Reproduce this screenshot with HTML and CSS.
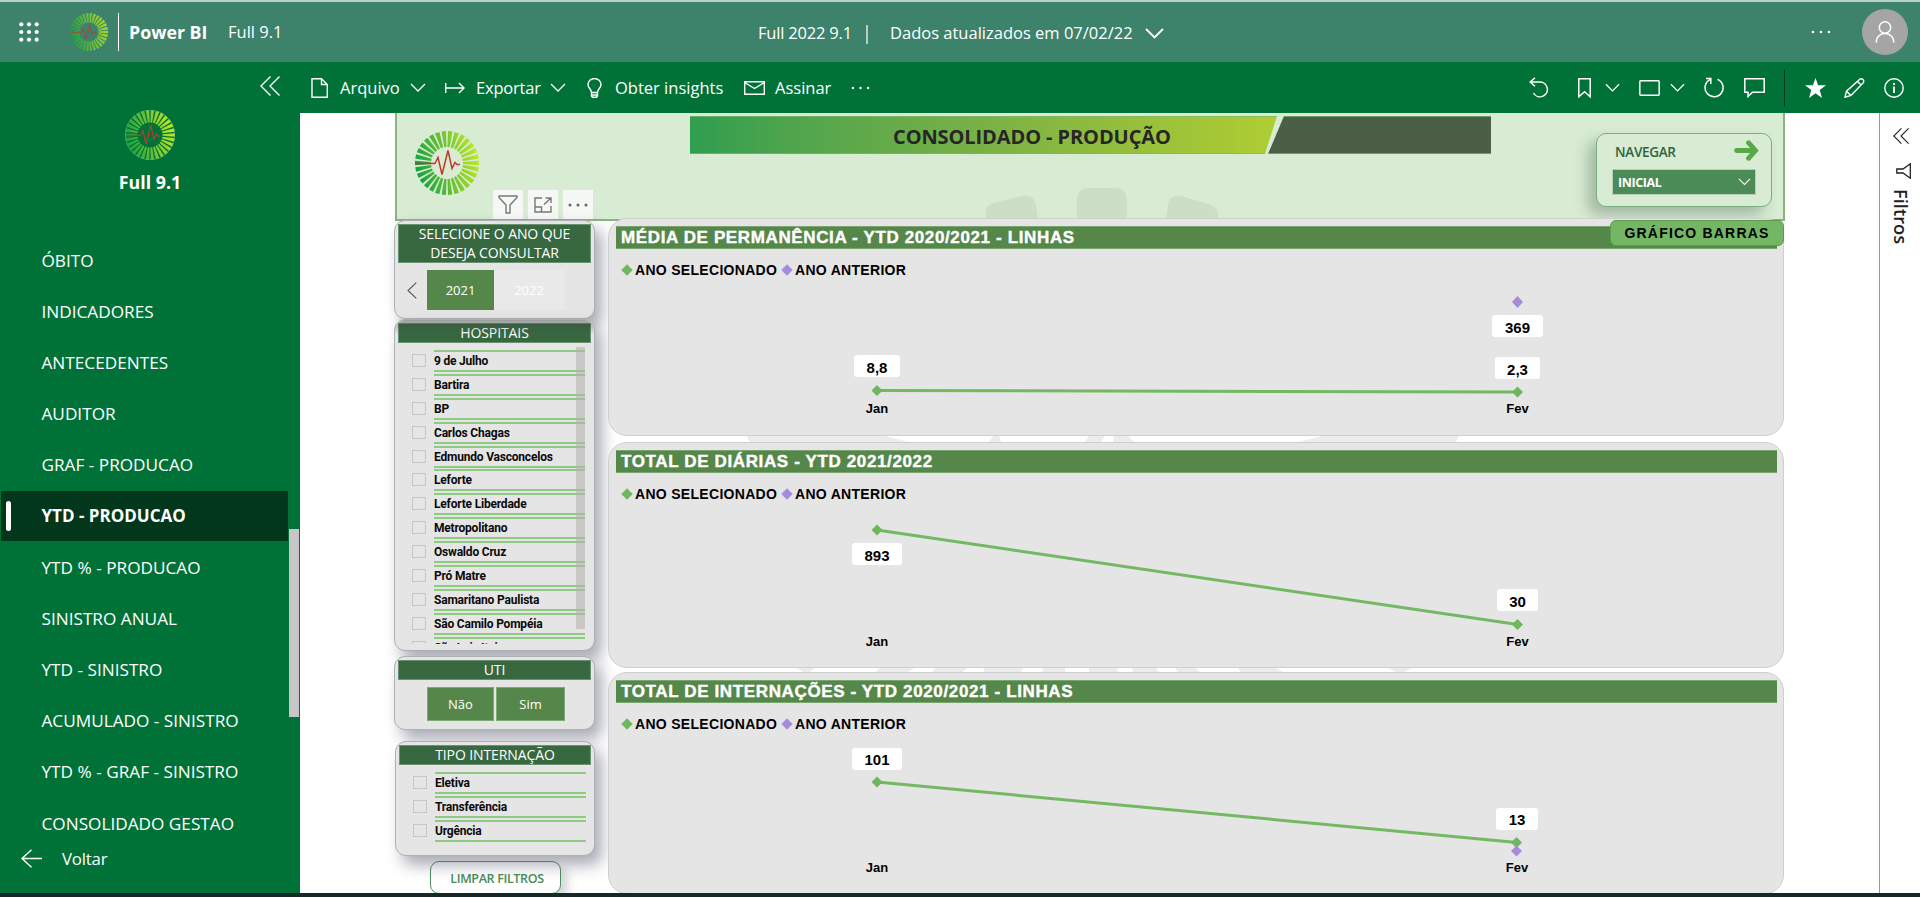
FILE: index.html
```html
<!DOCTYPE html>
<html lang="pt-BR">
<head>
<meta charset="utf-8">
<title>Full 9.1 - Power BI</title>
<link rel="stylesheet" href="styles.css">
</head>
<body>
<svg class="defs" width="0" height="0" aria-hidden="true">
  <defs>
    <linearGradient id="rays" gradientUnits="userSpaceOnUse" x1="0" y1="40" x2="64" y2="24">
      <stop offset="0" stop-color="#10a045"/><stop offset=".5" stop-color="#6cc136"/><stop offset="1" stop-color="#c3ea22"/>
    </linearGradient>
    <symbol id="logo" viewBox="0 0 64 64">
      <circle cx="32" cy="32" r="24" fill="none" stroke="url(#rays)" stroke-width="16" pathLength="300" stroke-dasharray="6.800 3.200" stroke-dashoffset="3.400"/>
      <path d="M0 32.500h20l3-6 4 17 6-24 4 18 3-6 2 2h3" fill="none" stroke="#c0392f" stroke-width="1.500"/>
    </symbol>
    <symbol id="chev" viewBox="0 0 16 10"><path d="M1 1l7 7 7-7" fill="none" stroke="currentColor" stroke-width="1.300"/></symbol>
    <symbol id="dots" viewBox="0 0 20 4"><circle cx="2" cy="2" r="1.300"/><circle cx="10" cy="2" r="1.300"/><circle cx="18" cy="2" r="1.300"/></symbol>
    <symbol id="dbl" viewBox="0 0 20 20"><path d="M10.500 .500L1 10l9.500 9.500M19.500 .500L10 10l9.500 9.500" fill="none" stroke="currentColor" stroke-width="1.400"/></symbol>
  </defs>
</svg>

<header class="top">
  <svg class="waffle" width="20" height="20" viewBox="0 0 20 20" fill="#fff"><circle cx="2.300" cy="2.300" r="2.100"/><circle cx="10" cy="2.300" r="2.100"/><circle cx="17.700" cy="2.300" r="2.100"/><circle cx="2.300" cy="10" r="2.100"/><circle cx="10" cy="10" r="2.100"/><circle cx="17.700" cy="10" r="2.100"/><circle cx="2.300" cy="17.700" r="2.100"/><circle cx="10" cy="17.700" r="2.100"/><circle cx="17.700" cy="17.700" r="2.100"/></svg>
  <svg class="top-logo" width="38" height="38"><use href="#logo"/></svg>
  <span class="top-brand">Power BI</span>
  <span class="top-ws">Full 9.1</span>
  <div class="top-mid"><span class="mid-name">Full 2022 9.1</span><i class="mid-bar"></i><span class="mid-date">Dados atualizados em 07/02/22</span><svg width="19" height="11" viewBox="0 0 19 11"><path d="M1 1l8.500 8.500L18 1" fill="none" stroke="#fff" stroke-width="1.900"/></svg></div>
  <svg class="top-dots" width="20" height="4" fill="#fff"><use href="#dots"/></svg>
  <span class="avatar"><svg width="20" height="22" viewBox="0 0 20 22" fill="none" stroke="#fff" stroke-width="1.500"><circle cx="10" cy="6.500" r="5.700"/><path d="M1.200 21.500c0-12 17.600-12 17.600 0"/></svg></span>
</header>

<div class="shell">
  <aside class="side">
    <div class="side-head"><svg width="20" height="20"><use href="#dbl"/></svg></div>
    <div class="side-app"><svg width="50" height="50"><use href="#logo"/><circle cx="25" cy="25" r="24.600" fill="none" stroke="#66ad77" stroke-width=".600"/></svg><span>Full 9.1</span></div>
    <nav class="menu">
      <a>ÓBITO</a><a>INDICADORES</a><a>ANTECEDENTES</a><a>AUDITOR</a><a>GRAF - PRODUCAO</a><a class="on">YTD - PRODUCAO</a><a>YTD % - PRODUCAO</a><a>SINISTRO ANUAL</a><a>YTD - SINISTRO</a><a>ACUMULADO - SINISTRO</a><a>YTD % - GRAF - SINISTRO</a><a>CONSOLIDADO GESTAO</a>
      <i class="menu-scroll"></i>
    </nav>
    <div class="back"><svg width="21" height="19" viewBox="0 0 21 19" fill="none" stroke="#fff" stroke-width="1.400"><path d="M21 9.500H1M10.500 .700L1 9.500l9.500 8.800"/></svg><span>Voltar</span></div>
  </aside>

  <main class="main">
    <div class="tools">
      <div class="tools-l">
        <svg class="i-file" width="17" height="20" viewBox="0 0 17 20" fill="none" stroke="#fff" stroke-width="1.400"><path d="M1 .700h9.500l5.800 5.800v12.800H1zM10.500 .700v5.800h5.800"/></svg>
        <span class="t-arq">Arquivo</span><svg class="c1" width="16" height="10"><use href="#chev"/></svg>
        <svg class="i-exp" width="20" height="12" viewBox="0 0 20 12" fill="none" stroke="#fff" stroke-width="1.400"><path d="M.700 1v10M.700 6H19M14 1l5 5-5 5"/></svg>
        <span class="t-exp">Exportar</span><svg class="c2" width="16" height="10"><use href="#chev"/></svg>
        <svg class="i-bulb" width="15" height="20" viewBox="0 0 15 20" fill="none" stroke="#fff" stroke-width="1.400"><path d="M4.500 14.500C4.500 11 1 10 1 6.700a6.500 6.200 0 0 1 13 0C14 10 10.500 11 10.500 14.500zM4.500 14.500v3.500l1 1.300h4l1-1.300v-3.500M4.500 17h6"/></svg>
        <span class="t-obt">Obter insights</span>
        <svg class="i-mail" width="21" height="14" viewBox="0 0 21 14" fill="none" stroke="#fff" stroke-width="1.400"><path d="M.700 .700h19.600v12.600H.700zM.700 1.500l9.800 6 9.800-6"/></svg>
        <span class="t-ass">Assinar</span>
        <svg class="i-dots" width="19" height="4" fill="#fff"><use href="#dots"/></svg>
      </div>
      <div class="tools-r">
        <svg width="20" height="21" viewBox="0 0 20 21" fill="none" stroke="#fff" stroke-width="1.500"><path d="M6 .800L1.200 5 6 9.300M1.200 5H11a7.400 7.400 0 1 1-6.500 11"/></svg>
        <svg class="g28" width="13" height="20" viewBox="0 0 13 20" fill="none" stroke="#fff" stroke-width="1.500"><path d="M.800 .800h11.400v18l-5.700-5-5.700 5z"/></svg>
        <svg class="g14" width="15" height="10"><use href="#chev"/></svg>
        <svg class="g20" width="21" height="16" viewBox="0 0 21 16" fill="none" stroke="#fff" stroke-width="1.500"><rect x=".800" y=".800" width="19.400" height="14.400" rx="1"/></svg>
        <svg class="g10" width="15" height="10"><use href="#chev"/></svg>
        <svg class="g19" width="21" height="21" viewBox="0 0 21 21" fill="none" stroke="#fff" stroke-width="1.500"><path d="M13.500 2.400a9 9 0 1 1-7.500.300M6.800 7V1.500H2"/></svg>
        <svg class="g19" width="21" height="20" viewBox="0 0 21 20" fill="none" stroke="#fff" stroke-width="1.500"><path d="M.800 .800h19.400v13.400H8.500L4 18.500v-4.300H.800z"/></svg>
        <i class="split"></i>
        <svg class="g20" width="21" height="20" viewBox="0 0 21 20" fill="#fff"><path d="M10.500 0l2.600 7.300H21l-6.300 4.800L17 20l-6.500-4.800L4 20l2.300-7.900L0 7.300h7.900z"/></svg>
        <svg class="g18" width="21" height="20" viewBox="0 0 21 20" fill="none" stroke="#fff" stroke-width="1.400"><path d="M1 19.200l1.500-6L15.500 1.500c2.500-2 5.500 1 3.500 3.500L7 17.500zM13.500 3.500l3.800 3.800M2.500 13.200L7 17.500"/></svg>
        <svg class="g19" width="20" height="20" viewBox="0 0 20 20" fill="none" stroke="#fff" stroke-width="1.400"><circle cx="10" cy="10" r="9.200"/><path d="M10 8.500v6.500M10 5v2" stroke-width="1.800"/></svg>
      </div>
    </div>

    <div class="canvas">
      <section class="report">
        <svg class="mark" width="720" height="500" viewBox="740 185 720 500" fill="#ececec">
          <path d="M747 436h138l24 6H749zM993 436h6l2 6h-12zM1089 436h16l-4 6h-16zM1114 436h14l6 6h-21zM1322 436h137l-3 6H1298zM796 668h19l-8 6zM880 668h34l-9 6h-32zM935 668h32l-6 6h-30zM985 668h38l-3 6h-38zM1043 668h22v6h-23zM1089 668h28l2 6h-30zM1132 668h24l4 6h-26zM1175 668h20l8 6h-24zM1238 668h38l10 6h-44zM1388 668h24l-12 6z"/>
        </svg>
        <div class="banner">
          <svg class="petals" width="236" height="32" viewBox="0 0 236 32" fill="#cbdfc7"><path d="M0 32V24c0-5 3-8 8-9l28-7c8-1 13 2 14 10l2 14zM91 32V13C91 4 95 0 103 0h26c8 0 12 4 12 13v19zM180 32l2-15c1-7 6-10 13-9l27 8c6 2 10 5 10 11v5z"/></svg>
          <svg class="b-logo" width="64" height="64"><use href="#logo"/></svg>
          <div class="title-band">
            <svg width="801" height="38" viewBox="0 0 801 38"><defs><linearGradient id="band"><stop offset="0" stop-color="#2e9e50"/><stop offset=".16" stop-color="#4ea44d"/><stop offset=".5" stop-color="#7ab146"/><stop offset="1" stop-color="#b0cd33"/></linearGradient></defs><path d="M0 0h587l-12 38H0z" fill="url(#band)"/><path d="M594 0h207v38H578z" fill="#4b5f46"/><path d="M0 .500h587M594 .500h207M0 37.500h575M578 37.500h223" stroke="#7fb56d" stroke-opacity=".7"/></svg>
            <span class="band-title">CONSOLIDADO - PRODUÇÃO</span>
          </div>
          <div class="visual-tools">
            <span><svg width="20" height="19" viewBox="0 0 20 19" fill="none" stroke="#777" stroke-width="1.400"><path d="M1 1h18v1.500L12 10v8H8v-8L1 2.500z"/></svg></span>
            <span><svg width="18" height="16" viewBox="0 0 18 16" fill="none" stroke="#777" stroke-width="1.400"><path d="M8 1H1v14h16V9M1 10h6.500v5M11.500 1H17v5M17 1l-7 6.500"/></svg></span>
            <span><svg width="20" height="4" viewBox="0 0 20 4" fill="#666"><circle cx="2" cy="2" r="1.500"/><circle cx="10" cy="2" r="1.500"/><circle cx="18" cy="2" r="1.500"/></svg></span>
          </div>
          <div class="nav-card">
            <div class="nav-row"><span>NAVEGAR</span><svg width="25" height="21" viewBox="0 0 25 21" fill="none" stroke="#58a748" stroke-width="4.800" stroke-linecap="round"><path d="M2.500 10.500h18M14.500 2.700l7 7.800-7 7.800"/></svg></div>
            <div class="nav-sel"><span>INICIAL</span><svg width="13" height="8"><use href="#chev"/></svg></div>
          </div>
        </div>

        <div class="body">
          <div class="filters">
            <section class="card f-ano">
              <h3>SELECIONE O ANO QUE<br>DESEJA CONSULTAR</h3>
              <div class="years"><svg width="10" height="17" viewBox="0 0 10 17" fill="none" stroke="#555" stroke-width="1.100"><path d="M9.300 .600L1 8.500l8.300 7.900"/></svg><b>2021</b><b class="off">2022</b></div>
            </section>
            <section class="card f-hosp">
              <h3>HOSPITAIS</h3>
              <ul class="list"><li><i></i><span>9 de Julho</span></li><li><i></i><span>Bartira</span></li><li><i></i><span>BP</span></li><li><i></i><span>Carlos Chagas</span></li><li><i></i><span>Edmundo Vasconcelos</span></li><li><i></i><span>Leforte</span></li><li><i></i><span>Leforte Liberdade</span></li><li><i></i><span>Metropolitano</span></li><li><i></i><span>Oswaldo Cruz</span></li><li><i></i><span>Pró Matre</span></li><li><i></i><span>Samaritano Paulista</span></li><li><i></i><span>São Camilo Pompéia</span></li><li><i></i><span>São Luiz Itaim</span></li></ul>
              <i class="list-scroll"></i>
            </section>
            <section class="card f-uti"><h3>UTI</h3><div class="pair"><b>Não</b><b>Sim</b></div></section>
            <section class="card f-tipo"><h3>TIPO INTERNAÇÃO</h3>
              <ul class="list"><li><i></i><span>Eletiva</span></li><li><i></i><span>Transferência</span></li><li><i></i><span>Urgência</span></li></ul>
            </section>
            <button class="clear">LIMPAR FILTROS</button>
          </div>

          <div class="charts">
            <section class="chart h1"><h2><span class="w1">MÉDIA DE PERMANÊNCIA - YTD 2020/2021 - LINHAS</span></h2>
              <span class="bars">GRÁFICO BARRAS</span>
              <div class="legend"><i></i><span class="l1">ANO SELECIONADO</span><i class="p"></i><span class="l2">ANO ANTERIOR</span></div>
              <svg class="plot" width="1176" height="150" viewBox="608 285 1176 150"><path d="M877 390.500L1517.500 392" class="ln"/><path class="dg" d="M877 385l5.500 5.500-5.500 5.500-5.500-5.500zM1517.500 386.500l5.500 5.500-5.500 5.500-5.500-5.500z"/><path class="dp" d="M1517.500 296l5.500 6-5.500 6-5.500-6z"/>
                <rect x="854" y="355" width="46" height="22" rx="3"/><rect x="1492" y="315" width="51" height="22" rx="3"/><rect x="1495" y="357" width="45" height="22" rx="3"/>
                <text x="877" y="373" class="v">8,8</text><text x="1517.500" y="333" class="v">369</text><text x="1517.500" y="375" class="v">2,3</text><text x="877" y="413" class="a">Jan</text><text x="1517.500" y="413" class="a">Fev</text></svg>
            </section>
            <section class="chart h2"><h2><span class="w2">TOTAL DE DIÁRIAS - YTD 2021/2022</span></h2>
              <div class="legend"><i></i><span class="l1">ANO SELECIONADO</span><i class="p"></i><span class="l2">ANO ANTERIOR</span></div>
              <svg class="plot" width="1176" height="150" viewBox="608 509 1176 150"><path d="M877 530L1517.500 624.500" class="ln"/><path class="dg" d="M877 524.500l5.500 5.500-5.500 5.500-5.500-5.500zM1517.500 619l5.500 5.500-5.500 5.500-5.500-5.500z"/>
                <rect x="852" y="543" width="50" height="22" rx="3"/><rect x="1497" y="589" width="41" height="22" rx="3"/>
                <text x="877" y="561" class="v">893</text><text x="1517.500" y="607" class="v">30</text><text x="877" y="646" class="a">Jan</text><text x="1517.500" y="646" class="a">Fev</text></svg>
            </section>
            <section class="chart h3"><h2><span class="w3">TOTAL DE INTERNAÇÕES - YTD 2020/2021 - LINHAS</span></h2>
              <div class="legend"><i></i><span class="l1">ANO SELECIONADO</span><i class="p"></i><span class="l2">ANO ANTERIOR</span></div>
              <svg class="plot" width="1176" height="150" viewBox="608 739 1176 150"><path d="M877 782L1517 842.500" class="ln"/><path class="dg" d="M877 776.500l5.500 5.500-5.500 5.500-5.500-5.500zM1516.500 837l5.500 5.500-5.500 5.500-5.500-5.500z"/><path class="dp" d="M1516.500 845.500l5.500 5.500-5.500 5.500-5.500-5.500z"/>
                <rect x="852" y="748" width="50" height="22" rx="3"/><rect x="1496" y="808" width="42" height="22" rx="3"/>
                <text x="877" y="765" class="v">101</text><text x="1517" y="825" class="v">13</text><text x="877" y="872" class="a">Jan</text><text x="1517" y="872" class="a">Fev</text></svg>
            </section>
          </div>
        </div>
      </section>

      <aside class="pane">
        <svg width="16" height="16"><use href="#dbl"/></svg>
        <svg class="pf" width="15" height="16" viewBox="0 0 15 16" fill="none" stroke="#222" stroke-width="1.300"><path d="M14.300 .800v14.400L7 10H.800V6H7z"/></svg>
        <span>Filtros</span>
      </aside>
    </div>
  </main>
</div>
<div class="taskbar"></div>
</body>
</html>
```
FILE: styles.css
```css
* { box-sizing: border-box; }
body { margin: 0; width: 1920px; height: 897px; overflow: hidden; display: flex; flex-direction: column; font-family: "Open Sans", "Noto Sans", sans-serif; color: #fff; background: #fff; }
svg { display: block; flex: none; }
.defs { position: absolute; }
span { white-space: nowrap; }
h2, h3, ul { margin: 0; padding: 0; font-weight: normal; }

.top { height: 62px; flex: none; background: #3d826b; border-top: 2px solid #b5d0cf; display: flex; align-items: center; padding: 0 12px 0 19px; font-size: 16.5px; position: relative; }
.top-logo { margin-left: 31px; opacity: .85; }
.top-brand { font-weight: 700; margin-left: 10px; border-left: 1.500px solid #fff; line-height: 35px; padding: 2px 0 0 10px; height: 38px; width: 100px; font-size: 17.800px; }
.top-ws { margin: -2px 0 0 10px; }
.top-mid { display: flex; align-items: center; position: absolute; left: 758px; top: 14px; height: 32px; }
.mid-name { width: 97px; letter-spacing: -0.200px; }
.mid-bar { width: 2px; height: 19px; background: #b7cec6; margin: 5px 22px 0 11px; }
.mid-date { width: 246px; }
.mid-date + svg { margin: 2px 0 0 9px; }
.top-dots { margin-left: auto; }
.avatar { width: 46px; height: 46px; margin-left: 31px; border-radius: 50%; background: #a5a5a5; display: flex; align-items: center; justify-content: center; }

.shell { display: flex; height: 831px; flex: none; }
.side { width: 300px; background: #007238; display: flex; flex-direction: column; flex: none; }
.side-head { display: flex; justify-content: flex-end; padding: 14px 20px 0 0; height: 48px; }
.side-app { display: flex; flex-direction: column; align-items: center; font-weight: 700; font-size: 17.800px; line-height: 24px; height: 125px; gap: 10px; }
.menu { position: relative; height: 610px; overflow: hidden; }
.menu a { display: flex; align-items: center; height: 50px; margin: 0 12px 1.200px 1px; padding-left: 40.500px; font-size: 17.200px; position: relative; }
.menu .on { background: #02371c; font-weight: 700; font-size: 17px; }
.menu .on::before { content: ""; position: absolute; left: 5px; top: 10px; width: 5px; height: 30px; border-radius: 3px; background: #fff; }
.menu-scroll { position: absolute; left: 289px; top: 294px; width: 10px; height: 188px; background: #c6c6c6; }
.back { display: flex; align-items: center; gap: 20px; padding-left: 21px; height: 28px; font-size: 16.800px; margin-top: -1px; letter-spacing: -0.200px; }

.main { flex: 1; min-width: 0; display: flex; flex-direction: column; }
.tools { height: 51px; background: #007238; display: flex; justify-content: space-between; padding: 0 16px 0 11px; font-size: 16.5px; }
.tools-l, .tools-r { display: flex; align-items: center; }
.tools-l span { margin-top: 0; }
.t-arq { width: 61px; margin: 0 9px 0 12px; }
.i-exp { margin-left: 19px; }
.t-exp { width: 65px; margin: 0 9px 0 11px; letter-spacing: -0.200px; }
.i-bulb { margin-left: 21px; }
.tools-l .t-obt { width: 109px; margin: 0 20px 0 13px; }
.t-ass { width: 56px; margin: 0 20px 0 10px; }
.g28 { margin-left: 29px; } .g14 { margin-left: 14px; } .g20 { margin-left: 19.500px; } .g10 { margin-left: 9.500px; } .g19 { margin-left: 19px; } .g18 { margin-left: 18.500px; }
.split { width: 1px; height: 36px; background: #03371c; margin-left: 19.500px; }

.canvas { flex: 1; display: flex; justify-content: space-between; background: #fff; min-height: 0; overflow: hidden; }
.report { margin-left: 95px; width: 1390px; position: relative; height: 780px; }
.mark { position: absolute; left: 345px; top: 72px; }
.banner { height: 108px; position: relative; background: #d8ebd3; border: 2px solid #8bb37f; border-top: 0; display: flex; }
.petals { position: absolute; left: 589px; top: 75px; }
.b-logo { margin: 18px 0 0 18px; }
.title-band { position: relative; margin: 3px 0 0 211px; width: 801px; height: 38px; }
.band-title { position: absolute; left: 203px; top: 6px; font-size: 20px; font-weight: 700; line-height: 30px; color: #262626; letter-spacing: -0.100px; }
.visual-tools { position: absolute; left: 96px; top: 77px; display: flex; gap: 5px; }
.visual-tools span { width: 30px; height: 29px; background: #f5f8f4; display: flex; align-items: center; justify-content: center; }
.nav-card { margin: 20px 0 0 105px; width: 176px; height: 74px; border: 1.500px solid #79ae82; border-radius: 10px; background: #d8ebd3; box-shadow: -8px 8px 14px rgba(90,110,90,.4); padding: 6px 15px; }
.nav-row { display: flex; justify-content: space-between; align-items: center; color: #2f6340; font-weight: 600; font-size: 13.500px; height: 22px; padding: 1px 0 0 3px; margin-right: -3px; letter-spacing: -0.300px; }
.nav-row svg { margin-top: -3px; }
.nav-sel { margin-top: 7px; height: 26px; background: #4a8b57; border: 1px solid #b8cfb7; display: flex; align-items: center; justify-content: space-between; padding: 0 4px 0 5px; font-size: 12.500px; font-weight: 700; letter-spacing: -0.400px; }

.body { display: flex; position: relative; margin-top: -2px; }
.filters { width: 200px; margin: 1px 0 0 -1px; display: flex; flex-direction: column; align-items: flex-start; flex: none; }
.card { width: 201px; background: #e5e5e5; border: 1px solid #aeb0b3; border-radius: 11px; box-shadow: 7px 9px 15px rgba(75,80,100,.48); padding: 3px 3px; position: relative; flex: none; }
.card h3 { background: #376840; border: 1px solid #6a9170; text-align: center; font-size: 14px; line-height: 18.500px; letter-spacing: -0.100px; }
.f-ano { height: 99px; }
.years { display: flex; align-items: center; margin: 7px 0 0 9px; }
.years b { width: 67px; height: 40px; line-height: 40px; text-align: center; font-weight: 400; font-size: 13px; background: #55874a; margin-left: 10px; }
.years .off { width: 70px; background: #e9e9e9; color: #fff; margin-left: 0; }
.f-hosp { height: 332px; }
.f-hosp::before { content: ""; position: absolute; inset: 0 0 auto 0; height: 14px; border-radius: 11px 11px 0 0; background: linear-gradient(rgba(60,70,65,.45), transparent); }
.f-hosp h3 { line-height: 18px; }
.list { list-style: none; margin: 6px 0 0 14px; height: 295px; overflow: hidden; }
.list li { display: flex; align-items: center; height: 23.900px; }
.list i { width: 14px; height: 13px; border: 1px solid #c6c6ca; margin: 0 8px 1px 0; flex: none; }
.list span { width: 151px; height: 22px; border: solid #8fca82; border-width: 2px 0; font: 700 12px/19px Roboto, sans-serif; color: #0a0a0a; letter-spacing: -0.200px; }
.list-scroll { position: absolute; left: 181px; top: 27px; width: 9px; height: 282px; background: rgba(180,177,175,.55); }
.f-uti { margin-top: 5px; height: 74px; }
.pair { display: flex; gap: 2px; margin: 7px 0 0 29px; }
.pair b { width: 67px; height: 34px; line-height: 32px; border: 1px solid #7faa76; background: #55874a; text-align: center; font-weight: 400; font-size: 13px; }
.f-uti h3, .f-tipo h3 { line-height: 18px; }
.pair b + b { width: 69px; }
.f-tipo { width: 200px; margin: 11px 0 0 1px; height: 115px; }
.f-tipo .list { height: 74px; margin-top: 6px; }
.clear { margin: 5px 0 0 36px; width: 131px; height: 33px; border: 1.500px solid #4f8f62; border-radius: 9px; background: #fff; color: #4a8b57; font: 600 12.500px "Open Sans", sans-serif; letter-spacing: -0.350px; box-shadow: 7px 7px 10px rgba(90,95,110,.25); padding: 2px 0 0 3px; }

.charts { margin-left: 14px; width: 1176px; display: flex; flex-direction: column; position: relative; margin-top: -1px; }
.chart { width: 1176px; background: #e5e5e5; border: 1px solid #cfcfcf; border-radius: 19px; padding: 7px 6px 0 7px; position: relative; flex: none; font-family: "Liberation Sans", Arial, sans-serif; }
.h1 { height: 218px; } .h2 { height: 226px; margin-top: 6px; } .h3 { height: 222px; margin-top: 4px; }
.chart h2 { height: 23px; background: #55874a; border: 1px solid #79a56f; border-width: 1px 0; padding-left: 5px; font-size: 17px; font-weight: 700; line-height: 21px; letter-spacing: .630px; -webkit-text-stroke: .4px #fff; }
.legend { display: flex; align-items: center; height: 16px; margin: 13px 0 0 6px; font-size: 14px; font-weight: 700; color: #000; letter-spacing: .300px; }
.legend i { width: 8px; height: 8px; background: #6fb75f; transform: rotate(45deg); margin: 0 4px 0 1px; }
.legend .p { background: #a58cda; margin-left: 8px; }
.legend .l1 { width: 140px; }
.plot { position: absolute; left: -1px; top: 66px; overflow: visible; }
.bars { position: absolute; right: -1px; top: 1px; width: 174px; height: 26px; background: #73b663; border: 1px solid #5b9b4e; border-radius: 6px; color: #000; font-size: 14px; font-weight: 700; line-height: 25px; text-align: center; letter-spacing: 1.200px; }
.ln { stroke: #73b863; stroke-width: 3; fill: none; }
.dg { fill: #6fb75f; } .dp { fill: #a58cda; }
.plot rect { fill: #fff; }
.plot text { text-anchor: middle; font-weight: 700; fill: #000; }
.v { font-size: 15px; } .a { font-size: 13px; }

.pane { width: 41px; border-left: 1px solid #9a9a9a; display: flex; flex-direction: column; align-items: center; padding: 15px 0 0 2px; color: #222; flex: none; }
.pf { margin: 19px 0 0 5px; }
.pane span { writing-mode: vertical-rl; font-size: 18.300px; font-weight: 600; margin-top: 10px; }
.taskbar { flex: 1; background: #15292d; }
```
